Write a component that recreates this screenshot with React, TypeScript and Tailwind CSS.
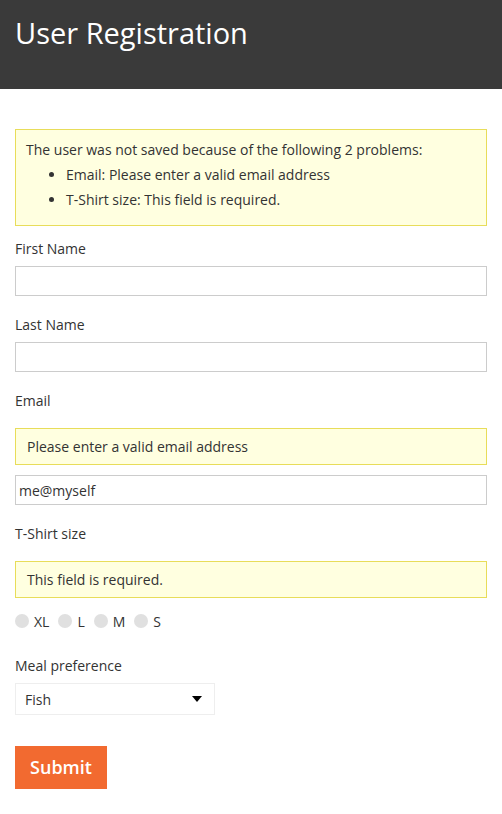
const font = { fontFamily: '"Open Sans", "Noto Sans", sans-serif' };

const Radio = ({ label }: { label: string }) => (
  <label className="flex items-center gap-[5px]">
    <span className="w-[14px] h-[14px] rounded-full bg-[#e0e0e0]" />
    <span>{label}</span>
  </label>
);

const App = () => {
  return (
    <div className="min-h-[814px] bg-white text-[14px] text-[#333333]" style={font}>
      <header className="bg-[#3a3a3a] h-[89px] px-[15px] pt-[11px]">
        <h1 className="text-white text-[29px] leading-[44px]">User Registration</h1>
      </header>

      <main className="px-[15px] pt-[40px]">
        <div className="bg-[#ffffe0] border border-[#e8dd5a] px-[10px] pt-[8px] h-[97px] leading-[24px]">
          <p>The user was not saved because of the following 2 problems:</p>
          <ul className="list-disc pl-[40px] leading-[25px]">
            <li>Email: Please enter a valid email address</li>
            <li>T-Shirt size: This field is required.</li>
          </ul>
        </div>

        <label className="block mt-[13px] leading-[20px]">First Name</label>
        <input className="block w-full h-[30px] mt-[7px] border border-[#cccccc] outline-none px-[3px]" />

        <label className="block mt-[19px] leading-[20px]">Last Name</label>
        <input className="block w-full h-[30px] mt-[7px] border border-[#cccccc] outline-none px-[3px]" />

        <label className="block mt-[19px] leading-[20px]">Email</label>
        <div className="mt-[17px] h-[37px] bg-[#ffffe0] border border-[#e8dd5a] px-[11px] flex items-center">
          Please enter a valid email address
        </div>
        <input
          defaultValue="me@myself"
          className="block w-full h-[30px] mt-[10px] border border-[#cccccc] outline-none px-[3px]"
        />

        <label className="block mt-[19px] leading-[20px]">T-Shirt size</label>
        <div className="mt-[17px] h-[37px] bg-[#ffffe0] border border-[#e8dd5a] px-[11px] flex items-center">
          This field is required.
        </div>
        <div className="flex items-center gap-[9px] mt-[13px] h-[20px]">
          <Radio label="XL" />
          <Radio label="L" />
          <Radio label="M" />
          <Radio label="S" />
        </div>

        <label className="block mt-[25px] leading-[20px]">Meal preference</label>
        <div className="mt-[7px] w-[200px] h-[32px] border border-[#eeeeee] flex items-center justify-between pl-[9px] pr-[12px]">
          <span>Fish</span>
          <svg width="10" height="6" viewBox="0 0 10 6">
            <path d="M0 0h10L5 6z" fill="#000" />
          </svg>
        </div>

        <button className="mt-[31px] h-[43px] w-[92px] bg-[#f26a30] text-white text-[18px] font-semibold">Submit</button>
      </main>
    </div>
  );
};

export default App;
